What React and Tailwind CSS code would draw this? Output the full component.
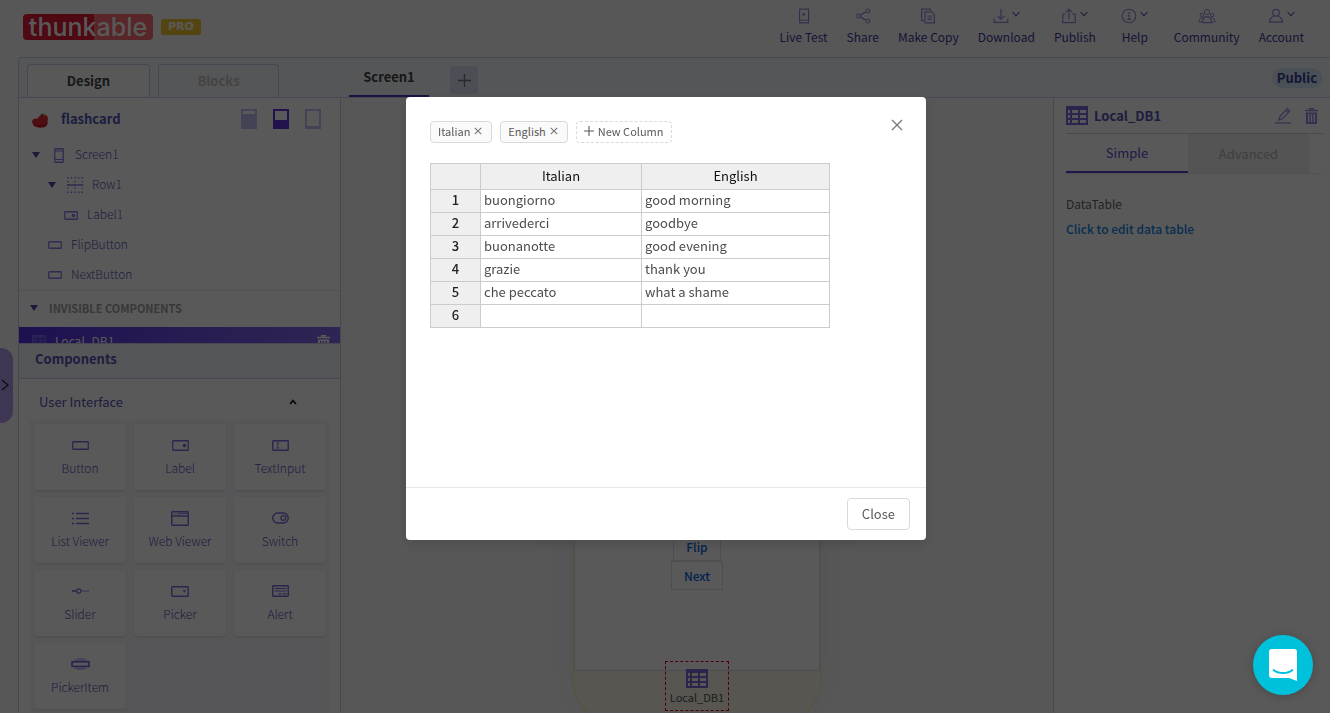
import React from "react";

const Svg = ({ w, h, className = "", children }) => (
  <svg width={w} height={h} viewBox={`0 0 ${w} ${h}`} fill="none" stroke="currentColor" aria-hidden="true" className={`shrink-0 ${className}`}>
    {children}
  </svg>
);

const Caret = () => (
  <Svg w={8} h={6}><path d="M0 0H8L4 6Z" fill="currentColor" stroke="none" /></Svg>
);

const TableIcon = ({ w = 22, h = 19 }) => (
  <svg width={w} height={h} viewBox="0 0 22 19" aria-hidden="true" className="shrink-0">
    <path fillRule="evenodd" fill="currentColor" d="M0 0H22V19H0ZM2 4V7H4V4ZM6 4V7H12V4ZM14 4V7H20V4ZM2 9V12H4V9ZM6 9V12H12V9ZM14 9V12H20V9ZM2 14V17H4V14ZM6 14V17H12V14ZM14 14V17H20V14Z" />
  </svg>
);

const TrashIcon = () => (
  <Svg w={13} h={16}>
    <path d="M0 2.5H13M4 .8H9" strokeWidth="1.6" />
    <path fillRule="evenodd" fill="currentColor" stroke="none" d="M1 4.5H12V16H1ZM3 6V14H4.4V6ZM5.8 6V14H7.2V6ZM8.6 6V14H10V6Z" />
  </Svg>
);

const RectIcon = ({ w = 14, h = 8 }) => (
  <Svg w={w} h={h}><rect x=".75" y=".75" width={w - 1.5} height={h - 1.5} rx=".6" strokeWidth="1.3" /></Svg>
);

const LabelIcon = ({ w = 14, h = 9 }) => (
  <Svg w={w} h={h}>
    <rect x=".75" y=".75" width={w - 1.5} height={h - 1.5} rx=".6" strokeWidth="1.3" />
    <circle cx={w - 4.5} cy={h / 2} r="1.8" fill="currentColor" stroke="none" />
  </Svg>
);

const PhoneIcon = () => (
  <Svg w={10} h={15}><rect x=".75" y=".75" width="8.5" height="13.5" rx=".5" strokeWidth="1.3" /><path d="M1 3H9M1 11.5H9" /></Svg>
);

const RowIcon = () => (
  <Svg w={16} h={16}>
    <path d="M0 .75H16M0 15.25H16" strokeWidth="1.5" strokeDasharray="1.5 2.1" />
    <path d="M.75 3.8V13M15.25 3.8V13M8 3.8V13" strokeWidth="1.3" strokeDasharray="1.4 1.9" />
    <path d="M0 8H16" strokeWidth="1.5" />
  </Svg>
);

const componentIcons = {
  Button: <RectIcon w={17} h={9} />,
  Label: <LabelIcon w={17} h={11} />,
  TextInput: (
    <Svg w={17} h={11}><rect x=".75" y=".75" width="15.5" height="9.5" rx=".6" strokeWidth="1.4" /><path d="M4 3H7.4M4 8H7.4M5.7 3V8" strokeWidth=".8" /></Svg>
  ),
  "List Viewer": (
    <Svg w={17} h={13}><path d="M4 1.5H17M4 6.5H17M4 11.5H17" strokeWidth="1.5" /><path d="M0 1.5H2M0 6.5H2M0 11.5H2" strokeWidth="1.5" /></Svg>
  ),
  "Web Viewer": (
    <Svg w={18} h={15}><rect x=".75" y=".75" width="16.5" height="13.5" rx=".5" strokeWidth="1.4" /><path d="M1 5H17" strokeWidth="1.4" /><path d="M2.5 3H3.6M4.6 3H5.7M7 1.5L8.6 4.5M8.6 2.4H16.5" strokeWidth=".9" /></Svg>
  ),
  Switch: (
    <Svg w={17} h={12}><rect x=".75" y="1" width="15.5" height="10" rx="5" strokeWidth="1.4" /><circle cx="11.3" cy="6" r="2.4" strokeWidth="1.3" /></Svg>
  ),
  Slider: (
    <Svg w={17} h={6}><path d="M0 3H4.5" strokeWidth="1.6" /><path d="M9 3H17" strokeWidth="1.1" opacity=".7" /><circle cx="6.8" cy="3" r="2.1" strokeWidth="1.1" /></Svg>
  ),
  Picker: (
    <Svg w={18} h={11}><rect x=".75" y=".75" width="16.5" height="9.5" rx=".8" strokeWidth="1.4" /><path d="M11.6 4.2H15.2L13.4 6.8Z" fill="currentColor" stroke="none" /></Svg>
  ),
  Alert: (
    <Svg w={17} h={12}><rect x=".75" y=".75" width="15.5" height="10.5" rx=".4" strokeWidth="1.4" /><path d="M2.5 3.5H14.5M2.5 6H14.5" strokeWidth="1.2" /><path d="M6.5 8.8H9.8M10.8 8.8H14.5" strokeWidth="1.2" /></Svg>
  ),
  PickerItem: (
    <Svg w={19} h={12}><rect x="1" y="3.8" width="17" height="4.6" strokeWidth="1.7" /><path d="M3.5 2H15.5M3.5 10.2H15.5" strokeWidth="1" opacity=".7" /><path d="M6 .5H13M6 11.6H13" strokeWidth=".8" opacity=".5" /></Svg>
  ),
};

const navIcons = {
  "Live Test": <Svg w={16} h={16}><rect x="3.6" y="1.2" width="9" height="13.6" strokeWidth="1.2" /><path d="M4 12.2H12.4" /><path d="M6.6 4.6L10 6.6L6.6 8.6Z" fill="currentColor" stroke="none" /></Svg>,
  Share: <Svg w={16} h={16}><circle cx="3" cy="8" r="2" /><circle cx="12.8" cy="3" r="2" /><circle cx="12.8" cy="13" r="2" /><path d="M4.9 7.1L11 4M4.9 8.9L11 12" strokeWidth="1.2" /></Svg>,
  "Make Copy": <Svg w={16} h={16}><path d="M4.4 12.6H1.6V1.2H10.4V3.2" strokeWidth="1.2" /><path d="M5 3.8H11.6L14.4 6.4V14.8H5Z" strokeWidth="1.2" /><path d="M7.4 8H12M7.4 9.8H12M7.4 11.6H12" strokeWidth=".9" /></Svg>,
  Download: <Svg w={16} h={16}><path d="M1.2 10.6V14.4H14.8V10.6M8 1V11M4.6 7.8L8 11.2L11.4 7.8" strokeWidth="1.2" /></Svg>,
  Publish: <Svg w={16} h={16}><path d="M4.8 6H1.8V14.6H14.2V6H11.2M8 11.4V1.4M5 4.2L8 1.2L11 4.2" strokeWidth="1.2" /></Svg>,
  Help: <Svg w={16} h={16}><circle cx="8" cy="8" r="6.8" strokeWidth="1.1" /><path d="M6.6 7.2H8.2V11.4M6.4 11.4H10" strokeWidth="1.1" /><circle cx="8" cy="5" r=".9" fill="currentColor" stroke="none" /></Svg>,
  Community: <Svg w={18} h={16}><circle cx="9" cy="4" r="2.6" /><path d="M4.6 14.6C4.4 11.4 5.6 8.6 9 8.6S13.6 11.4 13.4 14.6Z" strokeWidth="1.1" /><circle cx="3.8" cy="7" r="1.7" /><circle cx="14.2" cy="7" r="1.7" /><path d="M4 14H1.2C1 11.8 1.8 9.8 4.6 9.8M14 14H16.8C17 11.8 16.2 9.8 13.4 9.8" /></Svg>,
  Account: <Svg w={16} h={16}><circle cx="8" cy="4.8" r="3.4" strokeWidth="1.2" /><path d="M5.8 8.2C3.2 9 1.8 11 1.6 14.2H14.4C14.2 11 12.8 9 10.2 8.2" strokeWidth="1.2" /></Svg>,
};

const withMenu = ["Download", "Publish", "Help", "Account"];

function Header() {
  return (
    <header className="flex h-[57px] items-start justify-between pl-[23px] pr-[26px]">
      <a href="#home" className="mt-[14px] flex items-center gap-2">
        <span className="flex h-[26px] w-[130px] items-center justify-center rounded bg-[linear-gradient(90deg,#df1b35_55%,#fd6b72_55%)] font-['Inter',sans-serif] text-[25px] font-medium leading-[24px] text-white">
          thunkable
        </span>
        <span className="flex h-4 w-10 items-center justify-center rounded-[2px] bg-[#f0c62e] font-['DejaVu_Sans',sans-serif] text-[11px] font-bold text-white">
          PRO
        </span>
      </a>
      <nav className="flex gap-[19px] pt-2">
        {Object.keys(navIcons).map((name) => (
          <button key={name} className={`flex flex-col items-center gap-[5px] text-[12px] leading-[16px] text-[#3c3a9c] ${withMenu.includes(name) ? "min-w-10" : ""}`}>
            <span className="flex items-center gap-[3px] text-[#8f8cd8]">
              {navIcons[name]}
              {withMenu.includes(name) && (
                <Svg w={8} h={6} className="mb-1 text-[#4747a6]"><path d="M.6 1L4 4.8L7.4 1" strokeWidth="1.1" /></Svg>
              )}
            </span>
            {name}
          </button>
        ))}
      </nav>
    </header>
  );
}

function TreeRow({ indent, open, icon, name }) {
  return (
    <li className={`flex h-[30px] items-center font-light ${indent}`}>
      {open && <button aria-label={`Collapse ${name}`} className="mr-[11px] text-[#4a48a4]"><Caret /></button>}
      <span className="flex text-[#8f78ea]">{icon}</span>
      <span className="pb-[2px] pl-[9px]">{name}</span>
    </li>
  );
}

function LeftPanel() {
  return (
    <aside className="flex w-[322px] shrink-0 flex-col border-r border-[#c9cbe8] bg-white text-[#5553b8]">
      <div className="flex h-[42px] items-center px-3">
        <Svg w={20} h={20}>
          <path d="M1 13C1 10 4 9 7 9.6C8 6 11 4.5 14 5.4C17 6.6 17.6 10 16.4 12C17.4 14.6 16 18 12 18.6C8 19 3 18 2 15.5Z" fill="#e0262e" stroke="none" />
          <path d="M3 15.2C6 17.6 12 17.6 16 14.6" stroke="#a31420" strokeWidth="1" />
          <circle cx="11" cy="5.6" r="1.1" fill="#4c8a3c" stroke="none" /><circle cx="14" cy="5.8" r="1.1" fill="#f0c62e" stroke="none" />
        </Svg>
        <h1 className="flex-1 pl-[10px] text-[13px] font-bold">flashcard</h1>
        <div className="flex gap-4 pr-[7px]">
          <button aria-label="Show only components" className="text-[#c4bdf3]">
            <Svg w={16} h={20}><path d="M1 1H15V19H1Z" strokeWidth="2" /><path d="M0 5H16V20H0Z" fill="currentColor" stroke="none" /></Svg>
          </button>
          <button aria-label="Split view" className="text-[#6236e0]">
            <Svg w={16} h={20}><path d="M1 1H15V19H1Z" strokeWidth="2" /><path d="M0 11H16V20H0Z" fill="currentColor" stroke="none" /></Svg>
          </button>
          <button aria-label="Show only tree" className="text-[#c4bdf3]">
            <Svg w={16} h={20}><path d="M1 1H15V18H1Z" strokeWidth="2" /><path d="M0 17H16V20H0Z" fill="currentColor" stroke="none" /></Svg>
          </button>
        </div>
      </div>
      <ul className="h-[151px] border-b border-[#e6e6f2] text-[12px]">
        <TreeRow indent="pl-[13px]" open icon={<span className="flex w-[15px] justify-center"><PhoneIcon /></span>} name="Screen1" />
        <TreeRow indent="pl-[29px]" open icon={<RowIcon />} name="Row1" />
        <TreeRow indent="pl-[45px]" icon={<LabelIcon />} name="Label1" />
        <TreeRow indent="pl-[29px]" icon={<RectIcon />} name="FlipButton" />
        <TreeRow indent="pl-[29px]" icon={<RectIcon />} name="NextButton" />
      </ul>
      <div className="flex h-[36px] items-center gap-[11px] pb-[2px] pl-[11px] text-[11px] font-bold text-[#a0a0a0]">
        <button aria-label="Collapse invisible components" className="text-[#4a48a4]"><Caret /></button>
        INVISIBLE COMPONENTS
      </div>
      <div className="flex h-4 shrink-0 items-start justify-between overflow-hidden border-l-[3px] border-[#5a2ee6] bg-linear-to-r from-[#5a2ee6] to-[#8a68f0] pl-[10px] pr-[10px] text-[12px] text-white">
        <span className="flex items-center gap-[9px] pt-[5px] text-[#7a66ee]">
          <TableIcon w={14} h={12} />
          <span className="leading-[18px] text-white">Local_DB1</span>
        </span>
        <button aria-label="Delete Local_DB1" className="pt-2"><TrashIcon /></button>
      </div>
      <h2 className="flex h-9 shrink-0 items-center border-y border-[#c9cbe8] bg-[#f4f7fc] pb-1 pl-4 text-[13px] font-bold">Components</h2>
      <div className="flex min-h-0 flex-1 flex-col overflow-hidden px-[11px]">
        <button className="flex h-[41px] shrink-0 items-center justify-between pl-[9px] pr-8 pt-[4px] text-[13px]">
          User Interface
          <Svg w={8} h={6} className="text-[#222]"><path d="M1 5L4 1.6L7 5" strokeWidth="1.8" /></Svg>
        </button>
        <div className="grid flex-1 grid-cols-3 content-start gap-x-2 gap-y-[7px] bg-[#f7f7fb] pl-1 pr-[3px] pt-[4px]">
          {Object.keys(componentIcons).map((name) => (
            <button key={name} className="flex h-[66px] flex-col items-center rounded bg-white pt-[12px] text-[12px] font-light leading-[18px] shadow">
              <span className="flex h-[18px] items-center text-[#8068e0]">{componentIcons[name]}</span>
              <span className="pt-[5px]">{name}</span>
            </button>
          ))}
        </div>
      </div>
    </aside>
  );
}

function Canvas() {
  return (
    <main className="relative flex flex-1 justify-center overflow-hidden bg-[#fafafa] pt-6">
      <div className="h-[604px] w-[250px] shrink-0 self-start rounded-[48px] border-2 border-[#f8eecb] bg-[#f8f5e6] pt-10 shadow-[0_0_50px_rgba(0,0,0,0.06)]">
        <div className="flex h-[507px] flex-col items-center justify-end border border-[#d8dcec] bg-white pb-20 text-[12px] font-medium text-[#0b5fe0]">
          <button className="h-[29px] w-12 border border-[#dcdcec]">Flip</button>
          <button className="h-[29px] w-[52px] border border-[#dcdcec]">Next</button>
        </div>
      </div>
      <div className="absolute bottom-[2px] left-1/2 flex h-[50px] w-16 -translate-x-1/2 flex-col items-center justify-end border border-dashed border-[#e0001b] pb-[4px] text-[11px] text-[#555]">
        <span className="text-[#8068e0]"><TableIcon /></span>
        <span className="leading-[18px]">Local_DB1</span>
      </div>
    </main>
  );
}

function RightPanel() {
  return (
    <aside className="w-[277px] shrink-0 border-l border-[#c9cbe8] bg-white pl-3 pr-[7px] text-[13px]">
      <div className="flex h-[36px] items-center border-b border-[#cfcfe0] text-[#8068e0]">
        <TableIcon />
        <h2 className="flex-1 pl-[6px] font-bold text-[#5553b8]">Local_DB1</h2>
        <button aria-label="Rename" className="mr-[14px] text-[#9b88e8]">
          <Svg w={16} h={17}><path d="M4 13L5 9.4L12.4 1.6L14.8 4L7.4 11.8ZM11 3.2L13.2 5.4" strokeWidth="1.2" /><path d="M0 16H16" strokeWidth="1.2" /></Svg>
        </button>
        <button aria-label="Delete" className="mr-[5px] text-[#9b88e8]"><TrashIcon /></button>
      </div>
      <div className="flex h-10 border-b border-[#e8e8f0]">
        <button className="w-[122px] border-b-2 border-[#5b3fd0] text-[#5b48d0]">Simple</button>
        <button className="w-[121px] bg-[#f0f0f0] text-[#b5b5b5]">Advanced</button>
      </div>
      <p className="pt-5 text-[12px] leading-[20px] text-[#666]">DataTable</p>
      <a href="#table" className="block pt-1 text-[12px] font-medium leading-[22px] text-[#1583e6]">Click to edit data table</a>
    </aside>
  );
}

const rows = [
  ["buongiorno", "good morning"],
  ["arrivederci", "goodbye"],
  ["buonanotte", "good evening"],
  ["grazie", "thank you"],
  ["che peccato", "what a shame"],
  ["", ""],
];

function Tag({ name }) {
  return (
    <span className="flex h-[22px] items-center gap-1 rounded border border-[#d9d9d9] bg-[#fafafa] pb-[2px] pl-[7px] pr-[9px]">
      {name}
      <button aria-label={`Remove ${name}`} className="flex text-[#777]"><Svg w={8} h={8}><path d="M.8 .8L7.2 7.2M7.2 .8L.8 7.2" strokeWidth="1.1" /></Svg></button>
    </span>
  );
}

function Modal() {
  return (
    <div className="fixed inset-0 flex items-start justify-center bg-black/65 pl-[18px] pr-4 pt-[97px]">
      <section role="dialog" aria-label="Edit data table" className="relative w-full max-w-[520px] rounded bg-white shadow-[0_4px_12px_rgba(0,0,0,0.15)]">
        <button aria-label="Close dialog" className="absolute right-[23px] top-[22px] text-[#777]">
          <Svg w={12} h={12}><path d="M1 1L11 11M11 1L1 11" strokeWidth="1.3" /></Svg>
        </button>
        <div className="min-h-[390px] p-6">
          <div className="flex gap-2 text-[11px] text-[#595959]">
            <Tag name="Italian" />
            <Tag name="English" />
            <button className="flex h-[22px] items-center gap-1 rounded border border-dashed border-[#d9d9d9] px-[7px] pb-[2px]">
              <Svg w={10} h={10}><path d="M0 5H10M5 0V10" strokeWidth="1.1" /></Svg>
              New Column
            </button>
          </div>
          <table className="mt-5 w-[400px] table-fixed border-collapse text-[13px] leading-[20px] text-[#4c4c4c]">
            <colgroup><col className="w-[50px]" /><col className="w-[161px]" /><col /></colgroup>
            <thead>
              <tr className="h-[26px] bg-[#efefef] text-[#111]">
                <td className="border border-[#ccc]" />
                <th scope="col" className="border border-[#ccc] pb-[2px] font-normal">Italian</th>
                <th scope="col" className="border border-[#ccc] pb-[2px] font-normal">English</th>
              </tr>
            </thead>
            <tbody>
              {rows.map(([a, b], i) => (
                <tr key={i} className="h-[23px] align-top">
                  <th scope="row" className="border border-[#ccc] bg-[#efefef] font-medium text-[#222]">{i + 1}</th>
                  <td className="border border-[#ccc] px-[3px]">{a}</td>
                  <td className="border border-[#ccc] px-[3px]">{b}</td>
                </tr>
              ))}
            </tbody>
          </table>
        </div>
        <footer className="flex justify-end border-t border-[#e8e8e8] px-4 py-[10px]">
          <button className="h-8 rounded border border-[#d9d9d9] px-[14px] text-[13px] text-[#595959]">Close</button>
        </footer>
      </section>
    </div>
  );
}

export default function App() {
  return (
    <div className="flex h-screen flex-col overflow-hidden bg-[#fafafa] font-['Noto_Sans_CJK_SC',sans-serif] text-[13px]">
      <Header />
      <div className="flex min-h-0 flex-1">
        <div className="flex w-[18px] shrink-0 items-center">
          <button aria-label="Open drawer" className="flex h-[75px] w-[13px] items-center justify-center rounded-r-xl bg-[#b49bf0] text-[#222]">
            <Svg w={8} h={12} className="mr-1"><path d="M1 1L7 6L1 11" strokeWidth="1.2" /></Svg>
          </button>
        </div>
        <div className="flex min-w-0 flex-1 flex-col rounded-tl border-l border-t border-[#c9cbe8]">
          <div className="flex h-10 shrink-0 items-end rounded-tl border-b border-[#c9cbe8] bg-[#f4f7fc]">
            <div className="flex w-[330px] gap-2 pl-2 text-[13px] font-bold">
              <button className="h-[33px] w-[123px] rounded-t border border-b-0 border-[#c9cbe8] bg-[#fdfdfd] text-[#444]">Design</button>
              <button className="h-[33px] w-[121px] rounded-t border border-b-0 border-[#c9cbe8] text-[#c2c2c2]">Blocks</button>
            </div>
            <button className="h-[38px] w-20 border-b-2 border-[#5236c0] text-[13px] font-bold text-[#444]">Screen1</button>
            <button aria-label="Add screen" className="mb-[3px] ml-[21px] flex h-7 w-7 items-center justify-center rounded-[2px] bg-[#d8def0] text-[#777]">
              <Svg w={13} h={13}><path d="M0 6.5H13M6.5 0V13" strokeWidth="1.4" /></Svg>
            </button>
            <button className="mb-[9px] ml-auto mr-2 h-5 rounded-full bg-[#d0e4f5] px-[5px] text-[13px] font-bold leading-[18px] text-[#3f3d98]">Public</button>
          </div>
          <div className="flex min-h-0 flex-1">
            <LeftPanel />
            <Canvas />
            <RightPanel />
          </div>
        </div>
      </div>
      <Modal />
      <button aria-label="Open chat" className="fixed bottom-[18px] right-[17px] flex h-[60px] w-[60px] items-center justify-center rounded-full bg-[#00c1dc] shadow-[0_1px_8px_rgba(0,0,0,0.2)]">
        <svg width="28" height="32" viewBox="0 0 28 32" aria-hidden="true">
          <path d="M3 0H25A3 3 0 0 1 28 3V32L20 29H3A3 3 0 0 1 0 26V3A3 3 0 0 1 3 0Z" fill="#fff" />
          <path d="M4.500 21C9.500 25 18.500 25 23.500 21" fill="none" stroke="#00c1dc" strokeWidth="1.800" strokeLinecap="round" />
        </svg>
      </button>
    </div>
  );
}
